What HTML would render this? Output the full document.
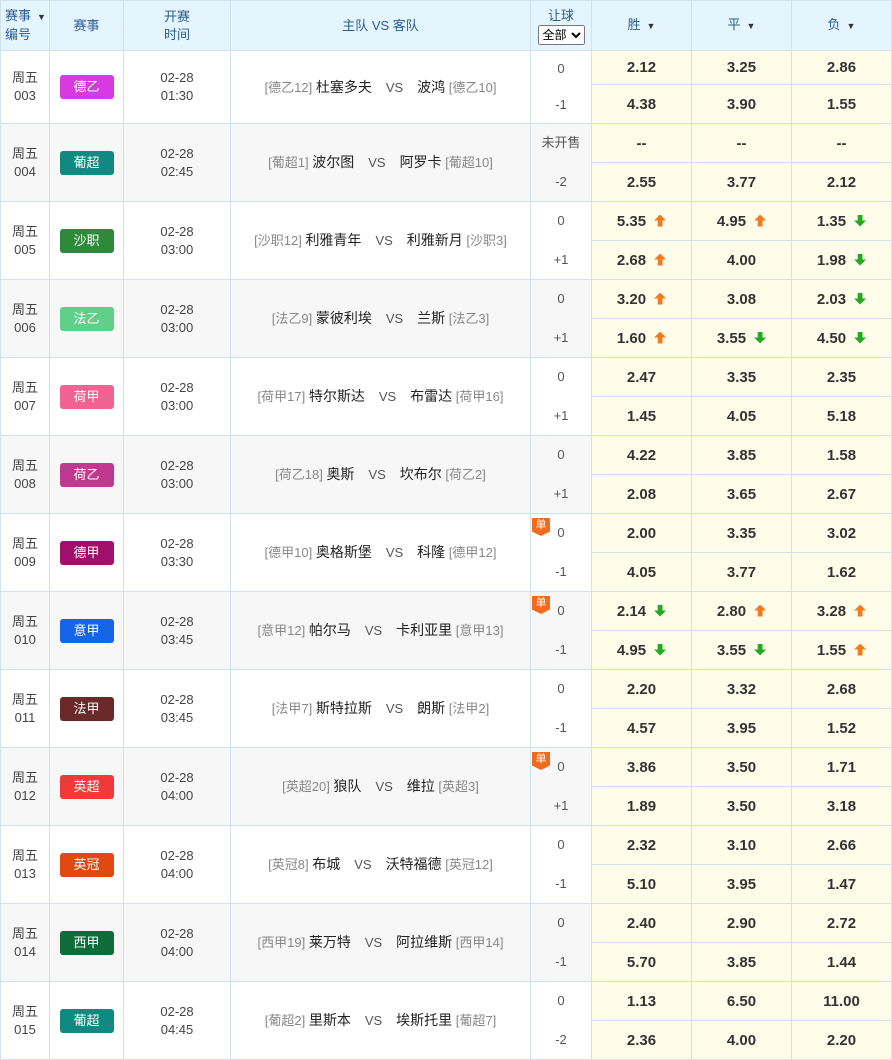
<!DOCTYPE html>
<html><head><meta charset="utf-8"><style>
body{margin:0;background:#fff;font-family:"Liberation Sans","Noto Sans CJK SC",sans-serif;}
table{border-collapse:collapse;table-layout:fixed;width:891px;}
td,th{border:1px solid #cfe3ee;padding:0;text-align:center;font-size:13px;color:#444;}
th{background:#e5f5fd;color:#2a5d94;font-weight:normal;height:49px;line-height:18px;}
tr.s td{height:38px;}
tr.r1 td{height:33px;}
tr.r2 td{height:38px;}
td.l{line-height:18px;}
td.o{background:#fffdea;font-weight:bold;font-size:15px;color:#333;}
.b{display:inline-block;width:54px;height:24px;line-height:24px;border-radius:3px;color:#fff;font-size:13px;}
.g td.l{background:#f7f7f7;}
.h{position:relative;}
.h div{height:50%;display:flex;align-items:center;justify-content:center;font-size:13px;color:#555;}
.dan{position:absolute;left:1px;top:4px;width:18px;height:18px;background:#f26a1b;color:#fff;font-size:11px;line-height:15px;clip-path:polygon(0 0,100% 0,100% 75%,50% 100%,0 75%);}
.tm{font-size:14px;color:#222;}
.rk{color:#888;font-size:13px;}
.vs{color:#555;margin:0 14px;}
i{display:inline-block;width:12px;height:12px;margin-left:8px;vertical-align:-1px;}
i.u{background:#f47a1f;clip-path:polygon(50% 0,100% 50%,70% 50%,70% 100%,30% 100%,30% 50%,0 50%);}
i.d{background:#22aa22;clip-path:polygon(30% 0,70% 0,70% 50%,100% 50%,50% 100%,0 50%,30% 50%);}
.ar{font-size:9px;margin-left:6px;color:#333;}
select{font-size:12px;height:20px;padding:0;}
</style></head><body>
<table>
<colgroup><col style="width:49px"><col style="width:74px"><col style="width:107px"><col style="width:300px"><col style="width:61px"><col style="width:100px"><col style="width:100px"><col style="width:100px"></colgroup>
<tr><th style="text-align:left;padding-left:4px">赛事<span class="ar">▼</span><br>编号</th><th>赛事</th><th>开赛<br>时间</th><th>主队 VS 客队</th><th>让球<br><select><option>全部</option></select></th><th>胜<span class="ar">▼</span></th><th>平<span class="ar">▼</span></th><th>负<span class="ar">▼</span></th></tr>

<tr class="r1"><td class="l" rowspan="2">周五<br>003</td><td class="l" rowspan="2"><span class="b" style="background:#d63ae0">德乙</span></td><td class="l" rowspan="2">02-28<br>01:30</td><td class="l" rowspan="2"><span class="rk">[德乙12]</span> <span class="tm">杜塞多夫</span><span class="vs">VS</span><span class="tm">波鸿</span> <span class="rk">[德乙10]</span></td><td class="l h" rowspan="2"><div>0</div><div>-1</div></td><td class="o">2.12</td><td class="o">3.25</td><td class="o">2.86</td></tr>
<tr class="r2"><td class="o">4.38</td><td class="o">3.90</td><td class="o">1.55</td></tr>

<tr class="s g"><td class="l" rowspan="2">周五<br>004</td><td class="l" rowspan="2"><span class="b" style="background:#0e8a80">葡超</span></td><td class="l" rowspan="2">02-28<br>02:45</td><td class="l" rowspan="2"><span class="rk">[葡超1]</span> <span class="tm">波尔图</span><span class="vs">VS</span><span class="tm">阿罗卡</span> <span class="rk">[葡超10]</span></td><td class="l h" rowspan="2"><div>未开售</div><div>-2</div></td><td class="o">--</td><td class="o">--</td><td class="o">--</td></tr>
<tr class="s"><td class="o">2.55</td><td class="o">3.77</td><td class="o">2.12</td></tr>

<tr class="s"><td class="l" rowspan="2">周五<br>005</td><td class="l" rowspan="2"><span class="b" style="background:#2e8a3a">沙职</span></td><td class="l" rowspan="2">02-28<br>03:00</td><td class="l" rowspan="2"><span class="rk">[沙职12]</span> <span class="tm">利雅青年</span><span class="vs">VS</span><span class="tm">利雅新月</span> <span class="rk">[沙职3]</span></td><td class="l h" rowspan="2"><div>0</div><div>+1</div></td><td class="o">5.35<i class="u"></i></td><td class="o">4.95<i class="u"></i></td><td class="o">1.35<i class="d"></i></td></tr>
<tr class="s"><td class="o">2.68<i class="u"></i></td><td class="o">4.00</td><td class="o">1.98<i class="d"></i></td></tr>

<tr class="s g"><td class="l" rowspan="2">周五<br>006</td><td class="l" rowspan="2"><span class="b" style="background:#5fcf8a">法乙</span></td><td class="l" rowspan="2">02-28<br>03:00</td><td class="l" rowspan="2"><span class="rk">[法乙9]</span> <span class="tm">蒙彼利埃</span><span class="vs">VS</span><span class="tm">兰斯</span> <span class="rk">[法乙3]</span></td><td class="l h" rowspan="2"><div>0</div><div>+1</div></td><td class="o">3.20<i class="u"></i></td><td class="o">3.08</td><td class="o">2.03<i class="d"></i></td></tr>
<tr class="s"><td class="o">1.60<i class="u"></i></td><td class="o">3.55<i class="d"></i></td><td class="o">4.50<i class="d"></i></td></tr>

<tr class="s"><td class="l" rowspan="2">周五<br>007</td><td class="l" rowspan="2"><span class="b" style="background:#f06292">荷甲</span></td><td class="l" rowspan="2">02-28<br>03:00</td><td class="l" rowspan="2"><span class="rk">[荷甲17]</span> <span class="tm">特尔斯达</span><span class="vs">VS</span><span class="tm">布雷达</span> <span class="rk">[荷甲16]</span></td><td class="l h" rowspan="2"><div>0</div><div>+1</div></td><td class="o">2.47</td><td class="o">3.35</td><td class="o">2.35</td></tr>
<tr class="s"><td class="o">1.45</td><td class="o">4.05</td><td class="o">5.18</td></tr>

<tr class="s g"><td class="l" rowspan="2">周五<br>008</td><td class="l" rowspan="2"><span class="b" style="background:#c0388f">荷乙</span></td><td class="l" rowspan="2">02-28<br>03:00</td><td class="l" rowspan="2"><span class="rk">[荷乙18]</span> <span class="tm">奥斯</span><span class="vs">VS</span><span class="tm">坎布尔</span> <span class="rk">[荷乙2]</span></td><td class="l h" rowspan="2"><div>0</div><div>+1</div></td><td class="o">4.22</td><td class="o">3.85</td><td class="o">1.58</td></tr>
<tr class="s"><td class="o">2.08</td><td class="o">3.65</td><td class="o">2.67</td></tr>

<tr class="s"><td class="l" rowspan="2">周五<br>009</td><td class="l" rowspan="2"><span class="b" style="background:#a0106a">德甲</span></td><td class="l" rowspan="2">02-28<br>03:30</td><td class="l" rowspan="2"><span class="rk">[德甲10]</span> <span class="tm">奥格斯堡</span><span class="vs">VS</span><span class="tm">科隆</span> <span class="rk">[德甲12]</span></td><td class="l h" rowspan="2"><span class="dan">单</span><div>0</div><div>-1</div></td><td class="o">2.00</td><td class="o">3.35</td><td class="o">3.02</td></tr>
<tr class="s"><td class="o">4.05</td><td class="o">3.77</td><td class="o">1.62</td></tr>

<tr class="s g"><td class="l" rowspan="2">周五<br>010</td><td class="l" rowspan="2"><span class="b" style="background:#1565e8">意甲</span></td><td class="l" rowspan="2">02-28<br>03:45</td><td class="l" rowspan="2"><span class="rk">[意甲12]</span> <span class="tm">帕尔马</span><span class="vs">VS</span><span class="tm">卡利亚里</span> <span class="rk">[意甲13]</span></td><td class="l h" rowspan="2"><span class="dan">单</span><div>0</div><div>-1</div></td><td class="o">2.14<i class="d"></i></td><td class="o">2.80<i class="u"></i></td><td class="o">3.28<i class="u"></i></td></tr>
<tr class="s"><td class="o">4.95<i class="d"></i></td><td class="o">3.55<i class="d"></i></td><td class="o">1.55<i class="u"></i></td></tr>

<tr class="s"><td class="l" rowspan="2">周五<br>011</td><td class="l" rowspan="2"><span class="b" style="background:#6b2a2a">法甲</span></td><td class="l" rowspan="2">02-28<br>03:45</td><td class="l" rowspan="2"><span class="rk">[法甲7]</span> <span class="tm">斯特拉斯</span><span class="vs">VS</span><span class="tm">朗斯</span> <span class="rk">[法甲2]</span></td><td class="l h" rowspan="2"><div>0</div><div>-1</div></td><td class="o">2.20</td><td class="o">3.32</td><td class="o">2.68</td></tr>
<tr class="s"><td class="o">4.57</td><td class="o">3.95</td><td class="o">1.52</td></tr>

<tr class="s g"><td class="l" rowspan="2">周五<br>012</td><td class="l" rowspan="2"><span class="b" style="background:#f03a3a">英超</span></td><td class="l" rowspan="2">02-28<br>04:00</td><td class="l" rowspan="2"><span class="rk">[英超20]</span> <span class="tm">狼队</span><span class="vs">VS</span><span class="tm">维拉</span> <span class="rk">[英超3]</span></td><td class="l h" rowspan="2"><span class="dan">单</span><div>0</div><div>+1</div></td><td class="o">3.86</td><td class="o">3.50</td><td class="o">1.71</td></tr>
<tr class="s"><td class="o">1.89</td><td class="o">3.50</td><td class="o">3.18</td></tr>

<tr class="s"><td class="l" rowspan="2">周五<br>013</td><td class="l" rowspan="2"><span class="b" style="background:#e04a10">英冠</span></td><td class="l" rowspan="2">02-28<br>04:00</td><td class="l" rowspan="2"><span class="rk">[英冠8]</span> <span class="tm">布城</span><span class="vs">VS</span><span class="tm">沃特福德</span> <span class="rk">[英冠12]</span></td><td class="l h" rowspan="2"><div>0</div><div>-1</div></td><td class="o">2.32</td><td class="o">3.10</td><td class="o">2.66</td></tr>
<tr class="s"><td class="o">5.10</td><td class="o">3.95</td><td class="o">1.47</td></tr>

<tr class="s g"><td class="l" rowspan="2">周五<br>014</td><td class="l" rowspan="2"><span class="b" style="background:#0e6b3a">西甲</span></td><td class="l" rowspan="2">02-28<br>04:00</td><td class="l" rowspan="2"><span class="rk">[西甲19]</span> <span class="tm">莱万特</span><span class="vs">VS</span><span class="tm">阿拉维斯</span> <span class="rk">[西甲14]</span></td><td class="l h" rowspan="2"><div>0</div><div>-1</div></td><td class="o">2.40</td><td class="o">2.90</td><td class="o">2.72</td></tr>
<tr class="s"><td class="o">5.70</td><td class="o">3.85</td><td class="o">1.44</td></tr>

<tr class="s"><td class="l" rowspan="2">周五<br>015</td><td class="l" rowspan="2"><span class="b" style="background:#0e8a80">葡超</span></td><td class="l" rowspan="2">02-28<br>04:45</td><td class="l" rowspan="2"><span class="rk">[葡超2]</span> <span class="tm">里斯本</span><span class="vs">VS</span><span class="tm">埃斯托里</span> <span class="rk">[葡超7]</span></td><td class="l h" rowspan="2"><div>0</div><div>-2</div></td><td class="o">1.13</td><td class="o">6.50</td><td class="o">11.00</td></tr>
<tr class="s"><td class="o">2.36</td><td class="o">4.00</td><td class="o">2.20</td></tr>
</table>
</body></html>
